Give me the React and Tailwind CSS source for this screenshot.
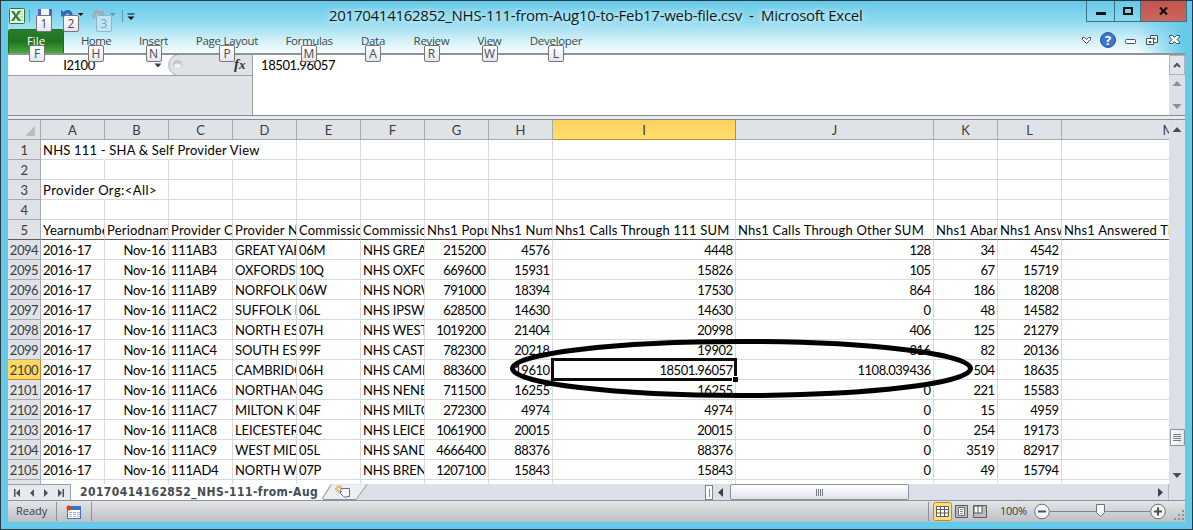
import clsx from 'clsx';

const UI = "font-['Open_Sans','Noto_Sans',sans-serif]";
const CELL = "font-['Lato','Liberation_Sans',sans-serif]";

const TABS = [
  { label: 'Home', tip: 'H', width: 'w-[58px]', spacing: 'tracking-[-0.6px]' },
  { label: 'Insert', tip: 'N', width: 'w-[57px]', spacing: 'tracking-[-0.3px]' },
  { label: 'Page Layout', tip: 'P', width: 'w-[90px]', spacing: 'tracking-[-0.25px]' },
  { label: 'Formulas', tip: 'M', width: 'w-[74px]', spacing: 'tracking-[-0.35px]' },
  { label: 'Data', tip: 'A', width: 'w-[54px]', spacing: 'tracking-[-0.3px]' },
  { label: 'Review', tip: 'R', width: 'w-[63px]', spacing: 'tracking-[-0.3px]' },
  { label: 'View', tip: 'W', width: 'w-[53px]', spacing: 'tracking-[-0.3px]' },
  { label: 'Developer', tip: 'L', width: 'w-[80px]', spacing: 'tracking-[-0.3px]' },
];

const COLUMNS = [
  { id: 'A', width: 'w-16' },
  { id: 'B', width: 'w-16', right: true },
  { id: 'C', width: 'w-16' },
  { id: 'D', width: 'w-16' },
  { id: 'E', width: 'w-16' },
  { id: 'F', width: 'w-16' },
  { id: 'G', width: 'w-16', right: true },
  { id: 'H', width: 'w-16', right: true },
  { id: 'I', width: 'w-[183px]', right: true },
  { id: 'J', width: 'w-[198px]', right: true },
  { id: 'K', width: 'w-16', right: true },
  { id: 'L', width: 'w-16', right: true },
  { id: 'M', width: 'w-[214px]' },
];

const HEADINGS = [
  'Yearnumber', 'Periodname', 'Provider Code', 'Provider Name', 'Commissioner', 'Commissioner',
  'Nhs1 Population', 'Nhs1 Number', 'Nhs1 Calls Through 111 SUM', 'Nhs1 Calls Through Other SUM',
  'Nhs1 Abandoned', 'Nhs1 Answered', 'Nhs1 Answered Through',
];

const ROWS = [
  [1, 'NHS 111 - SHA & Self Provider View'],
  [2],
  [3, 'Provider Org:<All>'],
  [4],
  [5, ...HEADINGS],
  [2094, '2016-17', 'Nov-16', '111AB3', 'GREAT YARMOUTH', '06M', 'NHS GREAT', '215200', '4576', '4448', '128', '34', '4542'],
  [2095, '2016-17', 'Nov-16', '111AB4', 'OXFORDSHIRE', '10Q', 'NHS OXFORD', '669600', '15931', '15826', '105', '67', '15719'],
  [2096, '2016-17', 'Nov-16', '111AB9', 'NORFOLK AND', '06W', 'NHS NORWICH', '791000', '18394', '17530', '864', '186', '18208'],
  [2097, '2016-17', 'Nov-16', '111AC2', 'SUFFOLK NHS', '06L', 'NHS IPSWICH', '628500', '14630', '14630', '0', '48', '14582'],
  [2098, '2016-17', 'Nov-16', '111AC3', 'NORTH ESSEX', '07H', 'NHS WEST E', '1019200', '21404', '20998', '406', '125', '21279'],
  [2099, '2016-17', 'Nov-16', '111AC4', 'SOUTH ESSEX', '99F', 'NHS CASTLE', '782300', '20218', '19902', '316', '82', '20136'],
  [2100, '2016-17', 'Nov-16', '111AC5', 'CAMBRIDGE', '06H', 'NHS CAMBR', '883600', '19610', '18501.96057', '1108.039436', '504', '18635'],
  [2101, '2016-17', 'Nov-16', '111AC6', 'NORTHAMPTON', '04G', 'NHS NENE', '711500', '16255', '16255', '0', '221', '15583'],
  [2102, '2016-17', 'Nov-16', '111AC7', 'MILTON KEYNES', '04F', 'NHS MILTON', '272300', '4974', '4974', '0', '15', '4959'],
  [2103, '2016-17', 'Nov-16', '111AC8', 'LEICESTERSHIRE', '04C', 'NHS LEICESTER', '1061900', '20015', '20015', '0', '254', '19173'],
  [2104, '2016-17', 'Nov-16', '111AC9', 'WEST MIDLANDS', '05L', 'NHS SANDWELL', '4666400', '88376', '88376', '0', '3519', '82917'],
  [2105, '2016-17', 'Nov-16', '111AD4', 'NORTH WEST', '07P', 'NHS BRENT', '1207100', '15843', '15843', '0', '49', '15794'],
];

// Cells whose right edge is covered by a title that spills over from column A
const SPILL = { 1: 3, 3: 1 };

function KeyTip({ children, className, faded }) {
  return (
    <span
      className={clsx(
        'absolute z-10 flex h-[17px] w-4 items-center justify-center rounded-[2px] border text-[12px] leading-none',
        faded
          ? 'border-[#8fb4c6] bg-[#c4e6f2]/90 text-[#7fa3b5]'
          : 'border-[#767676] bg-linear-to-b from-white to-[#e4e5f0] text-[#4c4c4c]',
        className,
      )}
    >
      {children}
    </span>
  );
}

function QuickAccess() {
  return (
    <div className="flex items-start pt-[7px] pl-[1px]">
      <svg width="16" height="16" viewBox="0 0 16 16">
        <rect x="0.5" y="0.5" width="15" height="15" rx="1" fill="#f3f8f0" stroke="#1e7a35" />
        <path d="M10 3h4M10 6h4M10 9h4M10 12h4" stroke="#9cc59d" />
        <path d="M2 3h3l2 3.400 2-3.400h3L8.500 8l3.800 5H9L6.800 9.800 4.800 13H1.800l3.600-5z" fill="#2c8a3b" />
      </svg>
      <span className="mt-0.5 ml-[4px] h-3 w-px bg-[#5e9bb0]" />
      <div className="relative ml-[7px] h-4 w-4">
        <svg width="16" height="16" viewBox="0 0 16 16">
          <path d="M1 1h14v14H3l-2-2z" fill="#5560c4" />
          <path d="M4 1h8v7H4z" fill="#f4f6ff" />
          <path d="M4 11h8v4H4z" fill="#c9cff0" />
        </svg>
        <KeyTip className="top-[7px] left-[-1px]">1</KeyTip>
      </div>
      <div className="relative ml-[7px] h-4 w-6">
        <svg width="24" height="16" viewBox="0 0 24 16">
          <path d="M1 1.500v7h7L5.500 6.200C7.500 4.500 10.500 5.500 10 10l2.500 2C14.500 4 9-1 3.400 3.900z" fill="#2f68c4" />
          <path d="M18 5h5.500l-2.750 3z" fill="#111" />
        </svg>
        <KeyTip className="top-[7px] left-[3px]">2</KeyTip>
      </div>
      <div className="relative ml-[8px] h-4 w-6">
        <svg width="24" height="16" viewBox="0 0 24 16">
          <path d="M12 1.500v7H5l2.500-2.300C5.500 4.500 2.500 5.500 3.500 10l-2 1C-1.500 4 4-1 9.600 3.900z" fill="#a3adb3" />
          <path d="M18 5h5.500l-2.750 3z" fill="#5d94a8" />
        </svg>
        <KeyTip faded className="top-[7px] left-[4px]">3</KeyTip>
      </div>
      <span className="mt-0.5 ml-[6px] h-3 w-px bg-[#5e9bb0]" />
      <svg className="mt-[5px] ml-[4px]" width="8" height="8" viewBox="0 0 8 8">
        <path d="M0.500 0.500h7v1h-7zM0.500 3.500h7L4 7z" fill="#111" />
      </svg>
    </div>
  );
}

function WindowButtons() {
  return (
    <div className="-mr-[2px] flex h-[21px] shrink-0 border border-t-0 border-[#3e7183]">
      <div className="flex w-[28px] justify-center border-r border-[#3e7183]">
        <span className="mt-[11px] h-[3px] w-[10px] bg-[#111]" />
      </div>
      <div className="flex w-[26px] justify-center border-r border-[#3e7183]">
        <span className="mt-[6px] h-2 w-[10px] border-2 border-[#111]" />
      </div>
      <div className="flex w-[45px] justify-center bg-linear-to-b from-[#c4544d] to-[#ca675f]">
        <svg className="mt-[6px]" width="9" height="8" viewBox="0 0 9 8">
          <path d="M1 0.500L8 7.500M8 0.500L1 7.500" stroke="#111" strokeWidth="2.2" />
        </svg>
      </div>
    </div>
  );
}

function TitleBar() {
  return (
    <div className="flex h-7 justify-between">
      <div className="w-[321px]">
        <QuickAccess />
      </div>
      <div className="flex-1 pt-[3px] text-[15px] leading-[22px] whitespace-nowrap text-[#0b1b22]">
        <span className="tracking-[-0.27px] [text-shadow:0_0_6px_#ffffffcc,0_0_10px_#ffffffcc]">
          20170414162852_NHS-111-from-Aug10-to-Feb17-web-file.csv&nbsp; -&nbsp; Microsoft Excel
        </span>
      </div>
      <WindowButtons />
    </div>
  );
}

function RibbonTabs() {
  return (
    <div className="flex h-6 text-[11.5px] text-[#3b4a50]">
      <div className="relative flex w-14 justify-center rounded-t-[3px] border border-b-0 border-[#1c6f20] bg-linear-to-b from-[#2c7d2b] via-[#1f7322] to-[#4aa83c] text-white">
        <span className="mt-[2px] leading-[17px]">File</span>
        <KeyTip className="top-[15px] left-5">F</KeyTip>
      </div>
      <div className="ml-[3px] flex">
        {TABS.map((tab) => (
          <div key={tab.label} className={clsx('relative flex justify-center', tab.width)}>
            <span className={clsx('mt-[3px] leading-[17px] whitespace-nowrap', tab.spacing)}>{tab.label}</span>
            <KeyTip className="top-4 left-1/2 -translate-x-1/2">{tab.tip}</KeyTip>
          </div>
        ))}
      </div>
      <svg className="mt-[1px] ml-auto" width="105" height="20" viewBox="0 0 105 20">
        <path d="M2.500 7.500h2l2 2 2-2h2v2l-4 4-4-4z" fill="#fff" stroke="#43535b" />
        <circle cx="28" cy="10" r="7.500" fill="#3f74c8" stroke="#2a57a5" />
        <text x="28" y="15" textAnchor="middle" fontSize="13" fontWeight="700" fill="#fff">?</text>
        <rect x="45.500" y="9.500" width="10" height="4" rx="1" fill="#fff" stroke="#43535b" />
        <path d="M70.500 5.500h7v7h-7z" fill="#fff" stroke="#43535b" />
        <path d="M66.500 8.500h7v6h-7z" fill="#fff" stroke="#43535b" />
        <path d="M69 11.500h2v1h-2zM73 8h2v2" fill="none" stroke="#43535b" />
        <path d="M89.500 5.500h3l2 2 2-2h3v1.500l-2.500 2.500 2.500 2.500v1.500h-3l-2-2-2 2h-3v-1.500l2.500-2.500-2.500-2.500z" fill="#fff" stroke="#43535b" />
      </svg>
    </div>
  );
}

function FormulaBar() {
  return (
    <div className="flex h-[60px] bg-[#dfe2e7]">
      <div className="flex w-[245px] flex-col border-r border-[#9a9fa6]">
        <div className="flex h-[21px] border-b border-[#9a9fa6]">
          <div className="flex w-40 bg-white">
            <span className={clsx(CELL, 'w-[142px] text-center text-[13px] leading-[20px] tracking-[-0.45px] text-black')}>I2100</span>
            <svg className="mt-[8px] ml-[4px]" width="8" height="5" viewBox="0 0 8 5">
              <path d="M0.500 0.500h7L4 4.500z" fill="#3a3a3a" />
            </svg>
          </div>
          <svg width="84" height="20" viewBox="0 0 84 20">
            <path d="M0 0h9C-2 2-2 18 9 20H0z" fill="#fff" />
            <path d="M9 0C-2 2-2 18 9 20" fill="none" stroke="#a9adb3" />
            <circle cx="9.500" cy="9.500" r="4.500" fill="#c3c7cc" />
            <ellipse cx="9.500" cy="11" rx="3.500" ry="2.500" fill="#eef0f2" />
            <text x="66" y="14" fontFamily="Liberation Serif, serif" fontStyle="italic" fontWeight="700" fontSize="15" fill="#333">f</text>
            <text x="71" y="14" fontFamily="Liberation Serif, serif" fontStyle="italic" fontWeight="700" fontSize="13" fill="#333">x</text>
          </svg>
        </div>
      </div>
      <div className={clsx(CELL, 'flex-1 bg-white pl-2 text-[13px] leading-[20px] tracking-[-0.4px] text-black')}>18501.96057</div>
      <div className="flex w-4 flex-col items-center bg-[#dce0e8]">
        <div className="flex h-5 w-4 items-center justify-center border border-[#b1b5bb] bg-[#e1e4e9]">
          <svg width="8" height="6" viewBox="0 0 8 6">
            <path d="M1 5l3-3 3 3" fill="none" stroke="#4b4f54" strokeWidth="2" />
          </svg>
        </div>
        <svg className="mt-[6px]" width="10" height="5" viewBox="0 0 10 5"><path d="M0.500 5L5 0l4.500 5z" fill="#87928f" /></svg>
        <svg className="mt-[18px]" width="10" height="5" viewBox="0 0 10 5"><path d="M0.500 0L5 5l4.500-5z" fill="#87928f" /></svg>
      </div>
    </div>
  );
}

function ColumnHeaders() {
  return (
    <div className="flex h-5 leading-[20px] text-[#3c3c3c]">
      <div className="flex w-[33px] shrink-0 items-end justify-end border-r border-b border-[#a6abb2] bg-[#dfe2e7] pr-[5px] pb-[3px]">
        <svg width="10" height="10" viewBox="0 0 10 10"><path d="M10 0v10H0z" fill="#b9bdc3" /></svg>
      </div>
      {COLUMNS.map((col) => (
        <div
          key={col.id}
          className={clsx(
            CELL,
            'shrink-0 border-r border-b text-center text-[13px]',
            col.width,
            col.id === 'I' ? 'border-[#c68a2c] bg-linear-to-b from-[#ffd05c] to-[#ffdf6e]' : 'border-[#a6abb2] bg-[#dfe2e7]',
          )}
        >
          {col.id}
        </div>
      ))}
    </div>
  );
}

function spacingFor(text, number) {
  if (number === 3) return 'tracking-[0.45px]';
  if (number <= 5) return 'tracking-[0.2px]';
  if (/^[\d.]+$/.test(text)) return 'tracking-[-0.5px]';
  if (/^[A-Z]{3}/.test(text)) return 'tracking-[-0.1px]';
  return 'tracking-[-0.25px]';
}

function Row({ row }) {
  const [number, ...cells] = row;
  const selected = number === 2100;
  const heading = number === 5;
  const covered = SPILL[number] || 0;

  return (
    <div className="flex h-5">
      <div
        className={clsx(
          CELL,
          'w-[33px] shrink-0 border-r border-b text-center text-[13px] leading-[20px] tracking-[-0.45px] text-[#3c3c3c]',
          selected ? 'border-[#c68a2c] bg-[#ffd863]' : 'border-[#a6abb2] bg-[#dfe2e7]',
          heading && 'border-b-[#5a5a5a]',
        )}
      >
        {number}
      </div>
      {COLUMNS.map((col, i) => (
        <div
          key={col.id}
          className={clsx(
            CELL,
            'shrink-0 border-r border-b pl-[2px] text-[13px] leading-[20px] whitespace-nowrap text-black',
            col.width,
            heading ? 'border-b-[#5a5a5a]' : 'border-b-[#d8d9db]',
            i < covered ? 'border-r-transparent' : 'border-r-[#d8d9db]',
            !(covered && i === 0) && 'overflow-hidden',
            col.right && !heading ? 'pr-[2.5px] text-right' : 'text-left',
            spacingFor(cells[i], number),
          )}
        >
          {cells[i]}
        </div>
      ))}
    </div>
  );
}

function Sheet() {
  return (
    <div className="relative flex h-[364px]">
      <div className="w-[1161px] overflow-hidden bg-white">
        <ColumnHeaders />
        {ROWS.map((row) => (
          <Row key={row[0]} row={row} />
        ))}
        <Row row={['']} />
      </div>
      <div className="flex w-4 flex-col items-center bg-[#dce0e8]">
        <svg className="mt-[7px]" width="10" height="5" viewBox="0 0 10 5"><path d="M0.500 5L5 0l4.500 5z" fill="#4b4f54" /></svg>
        <div className="mt-[297px] flex h-[17px] w-[15px] flex-col items-center justify-center gap-px rounded-[1px] border border-[#8c929b] bg-linear-to-r from-white to-[#e1e4ea]">
          <span className="h-px w-2 bg-[#777c84]" />
          <span className="h-px w-2 bg-[#777c84]" />
          <span className="h-px w-2 bg-[#777c84]" />
          <span className="h-px w-2 bg-[#777c84]" />
        </div>
        <svg className="mt-[27px]" width="10" height="5" viewBox="0 0 10 5"><path d="M0.500 0L5 5l4.500-5z" fill="#4b4f54" /></svg>
      </div>

      {/* active cell */}
      <div className="absolute top-[238px] left-[543px] h-[23px] w-[186px] border-3 border-[#0c0c0c]">
        <span className="absolute -right-[4px] -bottom-[4px] h-[6px] w-[6px] border-t border-l border-white bg-black" />
      </div>
      {/* hand-drawn ring around the two odd values */}
      <svg className="absolute top-[216px] left-[498px]" width="474" height="66" viewBox="0 0 474 66">
        <ellipse cx="235.500" cy="32.500" rx="229" ry="27" fill="none" stroke="#000" strokeWidth="5" />
      </svg>
    </div>
  );
}

function SheetTabs() {
  return (
    <div className="flex h-4 bg-[#dce0e8]">
      <div className="flex w-[63px] items-center border-t border-r border-[#9a9fa6] bg-[#e6e9ee]">
        <svg width="62" height="14" viewBox="0 0 62 14" fill="#4a5058">
          <path d="M6 3h1.500v8H6zM12 3v8L8 7zM26 3v8l-4-4zM36 3v8l4-4zM50 3v8l4-4zM54.500 3H56v8h-1.500z" />
        </svg>
      </div>
      <div className="w-[252px] bg-white pl-[9px] font-['DejaVu_Sans_Condensed','DejaVu_Sans',sans-serif] text-[12px] leading-[17px] font-bold tracking-[0.43px] whitespace-nowrap text-[#454c55]">
        20170414162852_NHS-111-from-Aug
      </div>
      <svg className="-ml-1" width="58" height="16" viewBox="0 0 58 16">
        <path d="M0 0h12L3 15.500H0z" fill="#fff" />
        <path d="M12 0.500L3 15" stroke="#8f959d" fill="none" />
        <path d="M14 0.500H48L37 15.500H4z" fill="#eceef2" />
        <path d="M48 0.500L37 15.500H4" stroke="#8f959d" fill="none" />
        <path d="M21.500 4.500h9v8h-3l-1 1.500-1-1.500h-1l-3-3z" fill="#f7f9ff" stroke="#5a6fa8" />
        <path d="M20 1v8M16 5h8M17.200 2.200l5.600 5.600M22.800 2.200l-5.600 5.600" stroke="#c8862e" />
        <circle cx="20" cy="5" r="1.500" fill="#fff0a8" />
      </svg>
      <div className="ml-auto flex">
        <div className="mt-px flex h-[15px] w-2 items-center justify-center border border-[#7e848c] bg-white">
          <span className="h-2 w-px bg-[#7e848c]" />
        </div>
        <svg className="mt-[4px] ml-[5px]" width="5" height="9" viewBox="0 0 5 9"><path d="M5 0v9L0 4.500z" fill="#3f4348" /></svg>
        <div className="ml-[7px] flex w-[179px] items-center justify-center gap-px rounded-[2px] border border-[#8c929b] bg-linear-to-b from-white to-[#dfe3ea]">
          <span className="h-[7px] w-px bg-[#777c84]" />
          <span className="h-[7px] w-px bg-[#777c84]" />
          <span className="h-[7px] w-px bg-[#777c84]" />
          <span className="h-[7px] w-px bg-[#777c84]" />
        </div>
        <svg className="mt-[4px] ml-[249px]" width="5" height="9" viewBox="0 0 5 9"><path d="M0 0v9l5-4.500z" fill="#3f4348" /></svg>
        <span className="ml-[5px] w-px bg-[#b8bdc5]" />
        <span className="w-4" />
      </div>
    </div>
  );
}

function StatusBar() {
  return (
    <div className="flex h-[22px] items-center border-t border-[#8c9299] bg-linear-to-b from-[#e3e5e8] to-[#bcc1c6] text-[11px] text-[#3c3c3c]">
      <span className="w-12 pl-2">Ready</span>
      <span className="h-[19px] w-px bg-[#8c9299]" />
      <svg className="ml-[9px]" width="16" height="14" viewBox="0 0 16 14">
        <rect x="1.500" y="1.500" width="13" height="12" fill="#fff" stroke="#4a6fb0" />
        <path d="M2 2h12v3H2z" fill="#3f72cc" />
        <path d="M3 7.500h3M7 7.500h3M11 7.500h3M3 9.500h3M7 9.500h3M11 9.500h3M3 11.500h3M7 11.500h3M11 11.500h3" stroke="#9fb2d8" />
        <circle cx="3" cy="3" r="2.500" fill="#cf3f2c" />
      </svg>
      <span className="ml-[9px] h-[19px] w-px bg-[#8c9299]" />
      <div className="ml-auto flex h-full items-center">
        <span className="mr-[4px] h-[19px] w-px bg-[#8c9299]" />
        <svg width="55" height="20" viewBox="0 0 55 20">
          <rect x="0.500" y="0.500" width="18" height="18" rx="2" fill="#ffe07a" stroke="#c08a28" />
          <path d="M3.500 4.500h12v10h-12zM3.500 7.500h12M3.500 11h12M7.500 4.500v10M11.500 4.500v10" fill="#fff" stroke="#5c5c5c" />
          <path d="M22.500 3.500h12v12h-12z" fill="#b9bdc2" stroke="#5c5c5c" />
          <path d="M25.500 5.500h6v8h-6z" fill="#fff" stroke="#6c6c6c" />
          <path d="M27 7.500h3M27 9.500h3M27 11.500h3" stroke="#8c8c8c" />
          <path d="M40.500 3.500h13v12h-13z" fill="#b9bdc2" stroke="#5c5c5c" />
          <path d="M41 4h8v7h-8zM45 4v7" fill="#fff" stroke="#5c5c5c" />
        </svg>
        <span className="ml-3 w-[34px] text-[11px] tracking-[-0.3px]">100%</span>
        <svg width="150" height="21" viewBox="0 0 150 21">
          <path d="M16 10.500h100" stroke="#808690" />
          <circle cx="8" cy="10.500" r="7.300" fill="#f4f5f6" stroke="#6d7278" />
          <path d="M4 10.500h8" stroke="#4c5056" strokeWidth="2" />
          <path d="M62.500 3.500h8v8l-4 4-4-4z" fill="#f6f7f8" stroke="#6d7278" />
          <circle cx="124" cy="10.500" r="7.300" fill="#f4f5f6" stroke="#6d7278" />
          <path d="M120 10.500h8M124 6.500v8" stroke="#4c5056" strokeWidth="2" />
          <path d="M140 17h2v2h-2zM144 17h2v2h-2zM148 17h2v2h-2zM144 13h2v2h-2zM148 13h2v2h-2zM148 9h2v2h-2z" fill="#8d9298" />
        </svg>
        <span className="w-px" />
      </div>
    </div>
  );
}

export default function App() {
  return (
    <div className={clsx(UI, 'h-[530px] w-[1193px] overflow-hidden border border-[#2c3a42] bg-[#65c9e9] pr-[7px] pl-[7px]')}>
      <div className="bg-[linear-gradient(to_right,transparent_96%,#65c9e9),linear-gradient(to_bottom,#65c9e9,#8fdaef_40%,#d2f0f8_75%,#f6fdfd)]">
        <TitleBar />
        <RibbonTabs />
      </div>
      <div className="h-[2px] bg-[#8d939b]" />
      <FormulaBar />
      <div className="h-[5px] border-t border-b border-[#858a91] bg-[#e8ebf2]" />
      <Sheet />
      <SheetTabs />
      <StatusBar />
    </div>
  );
}
